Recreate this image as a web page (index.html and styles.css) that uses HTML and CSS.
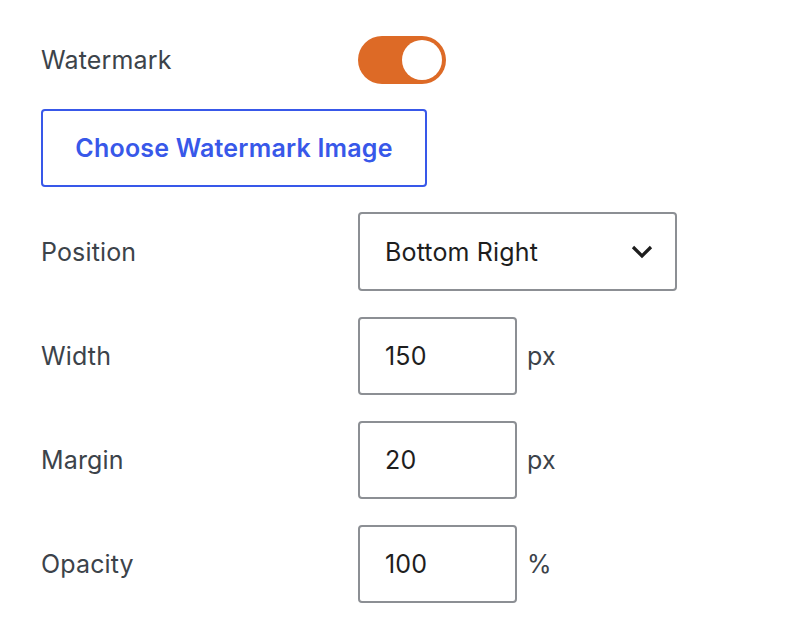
FILE: index.html
```html
<!DOCTYPE html>
<html lang="en">
<head>
    <meta charset="UTF-8" />
    <meta name="viewport" content="width=device-width, initial-scale=1.0" />
    <title>Watermark Settings</title>
    <link rel="stylesheet" href="styles.css">
</head>
<body>

    <div class="settings">
        <div class="row toggle-row">
            <span class="label">Watermark</span>
            <span class="toggle is-on"><span class="knob"></span></span>
        </div>

        <button class="choose-btn">Choose Watermark Image</button>

        <div class="row field-row position-row">
            <span class="label">Position</span>
            <div class="select">
                <span>Bottom Right</span>
                <svg class="chevron" width="22" height="14" viewBox="0 0 22 14">
                    <path d="M2 2 L11 11 L20 2" fill="none" stroke="#1e1e1e" stroke-width="3.2" />
                </svg>
            </div>
        </div>

        <div class="row field-row">
            <span class="label">Width</span>
            <div class="input">150</div>
            <span class="unit">px</span>
        </div>

        <div class="row field-row">
            <span class="label">Margin</span>
            <div class="input">20</div>
            <span class="unit">px</span>
        </div>

        <div class="row field-row">
            <span class="label">Opacity</span>
            <div class="input">100</div>
            <span class="unit">%</span>
        </div>
    </div>

</body>
</html>
```

FILE: styles.css
```css
body {
    margin: 0;
    background-color: #fff;
    font-family: Inter, "Noto Sans", sans-serif;
    font-size: 25px;
    letter-spacing: 0.15px;
    line-height: 1.2;
}

.settings {
    padding: 36px 0 0 41px;
}

.row {
    display: flex;
    align-items: center;
}

.toggle-row {
    height: 48px;
}

.label {
    width: 317px;
    color: #3c434a;
}

.toggle {
    width: 88px;
    height: 48px;
    border-radius: 24px;
    background-color: #dd6a26;
    box-sizing: border-box;
    padding: 4px;
    display: flex;
    justify-content: flex-end;
}

    .knob {
        width: 40px;
        height: 40px;
        border-radius: 50%;
        background-color: #fff;
    }

.choose-btn {
    display: block;
    margin-top: 25px;
    width: 386px;
    height: 78px;
    background: #fff;
    border: 2px solid #3858e9;
    border-radius: 4px;
    color: #3858e9;
    font-family: inherit;
    font-size: 25px;
    letter-spacing: 0.2px;
    font-weight: 600;
    padding: 0;
}

.field-row {
    margin-top: 26px;
}

.position-row {
    margin-top: 25px;
}

.select {
    width: 319px;
    height: 79px;
    box-sizing: border-box;
    border: 2px solid #8c8f94;
    border-radius: 4px;
    display: flex;
    align-items: center;
    justify-content: space-between;
    padding: 0 22px 0 25px;
    color: #1e1e1e;
}

.input {
    width: 159px;
    height: 78px;
    box-sizing: border-box;
    border: 2px solid #8c8f94;
    border-radius: 4px;
    display: flex;
    align-items: center;
    padding-left: 25px;
    color: #1e1e1e;
}

.unit {
    margin-left: 10px;
    color: #3c434a;
}
```
